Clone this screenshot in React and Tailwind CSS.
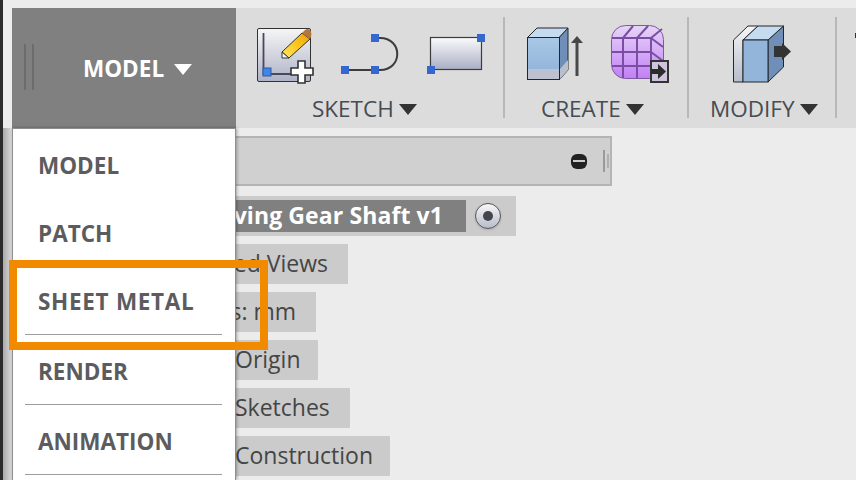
import React from 'react'

const FONT = "font-['Open_Sans','Noto_Sans',sans-serif]"

function SketchIcon() {
  return (
    <svg width="58" height="58" viewBox="0 0 58 58" className="shrink-0 mt-[11px]">
      <defs>
        <linearGradient id="paper" x1="0" y1="0" x2="0" y2="1">
          <stop offset="0" stopColor="#f6f6f7" />
          <stop offset="1" stopColor="#aeb2c6" />
        </linearGradient>
        <linearGradient id="pencil" x1="0" y1="1" x2="1" y2="0">
          <stop offset="0" stopColor="#ffe868" />
          <stop offset="0.5" stopColor="#fbc81e" />
          <stop offset="1" stopColor="#e9a010" />
        </linearGradient>
      </defs>
      <rect x="0.5" y="0.5" width="53" height="53" rx="1.5" fill="url(#paper)" stroke="#333" strokeWidth="1" />
      <path d="M6.5 5V46H36" fill="none" stroke="#45495a" strokeWidth="1.8" />
      <rect x="6" y="40" width="8" height="8" fill="#3f86e6" stroke="#2a5ba8" />
      <path d="M25 24L45 5L53 11L32 30Z" fill="url(#pencil)" stroke="#333" strokeWidth="1" />
      <path d="M25 24L32 30L25 30Z" fill="#f4f4f4" stroke="#333" strokeWidth="1" />
      <path d="M45 5L48 2C50 0 54 1 54 4C55 6 54 9 53 11Z" fill="#b5763c" />
      <path d="M41 33H48V40H56V47H48V55H41V47H34V40H41Z" fill="#fff" stroke="#333" strokeWidth="1.6" />
    </svg>
  )
}

function ArcIcon() {
  return (
    <svg width="60" height="42" viewBox="0 0 60 42" className="shrink-0 mt-[17px] ml-[26px]">
      <path d="M8 36H30M34 36H39C62 36 62 4 39 4H36" fill="none" stroke="#3c3c40" strokeWidth="2" />
      <rect x="0" y="32" width="8" height="8" fill="#3568cf" />
      <rect x="30" y="32" width="8" height="8" fill="#3568cf" />
      <rect x="30" y="0" width="8" height="8" fill="#3568cf" />
    </svg>
  )
}

function RectIcon() {
  return (
    <svg width="60" height="42" viewBox="0 0 60 42" className="shrink-0 mt-[17px] ml-[26px]">
      <defs>
        <linearGradient id="rectFill" x1="0" y1="0" x2="0" y2="1">
          <stop offset="0" stopColor="#fbfbfc" />
          <stop offset="1" stopColor="#a8aec4" />
        </linearGradient>
      </defs>
      <rect x="3.5" y="3.5" width="51" height="32" fill="url(#rectFill)" stroke="#3c3c40" strokeWidth="1.2" />
      <rect x="0" y="32" width="8" height="8" fill="#3568cf" />
      <rect x="50" y="0" width="8" height="8" fill="#3568cf" />
    </svg>
  )
}

function ExtrudeIcon() {
  return (
    <svg width="56" height="54" viewBox="0 0 56 54" className="shrink-0 mt-[10px]">
      <defs>
        <linearGradient id="boxFront" x1="0" y1="0" x2="0" y2="1">
          <stop offset="0" stopColor="#a9c8e6" />
          <stop offset="1" stopColor="#8db0d6" />
        </linearGradient>
      </defs>
      <path d="M32 10.5L41 1V43L32 53Z" fill="#6f8fb8" stroke="#25262a" strokeWidth="1" />
      <path d="M0.5 10.5L10 1H41L32 10.5Z" fill="#c5dcf0" stroke="#25262a" strokeWidth="1" />
      <rect x="0.5" y="10.5" width="32" height="42" fill="url(#boxFront)" stroke="#25262a" strokeWidth="1" />
      <rect x="1" y="42" width="31" height="10" fill="#bcc2cf" />
      <path d="M33 42L41 33V43L33 52Z" fill="#b9bfcc" />
      <path d="M50 49V12" stroke="#48484a" strokeWidth="3" />
      <path d="M44 16L50 9L56 16Z" fill="#48484a" />
    </svg>
  )
}

function PatchIcon() {
  return (
    <svg width="58" height="58" viewBox="0 0 58 58" className="shrink-0 mt-[8px] ml-[28px]">
      <defs>
        <linearGradient id="purple" x1="0" y1="0" x2="0" y2="1">
          <stop offset="0" stopColor="#e6d6f6" />
          <stop offset="1" stopColor="#c37ff6" />
        </linearGradient>
      </defs>
      <rect x="0.5" y="0.5" width="52" height="53" rx="14" fill="url(#purple)" stroke="#7d5a9c" strokeWidth="1" />
      <path d="M1 13H40L51 4M12 13L22 1M26 13L37 1M40 13L52 22M40 27L52 36M1 27H40M1 41H40M12 13V53M26 13V53M40 13V50" fill="none" stroke="#7a4ea3" strokeWidth="2" />
      <rect x="40" y="36" width="17" height="21" fill="#cfc3dc" stroke="#333" strokeWidth="2" />
      <path d="M40 44H47V39L55 46.500L47 54V49H40Z" fill="#2b2b2b" />
    </svg>
  )
}

function PressPullIcon() {
  return (
    <svg width="58" height="58" viewBox="0 0 58 58" className="shrink-0 mt-[8px]">
      <defs>
        <linearGradient id="slab" x1="0" y1="0" x2="0" y2="1">
          <stop offset="0" stopColor="#f4f5f7" />
          <stop offset="1" stopColor="#b7bccb" />
        </linearGradient>
      </defs>
      <path d="M0.500 15L15 1H25L10 15V57H0.500Z" fill="url(#slab)" stroke="#25262a" strokeWidth="1" />
      <path d="M35 15L50.500 1V42L35 57Z" fill="#6f8fb8" stroke="#25262a" strokeWidth="1" />
      <path d="M10 15L25 1H50.500L35 15Z" fill="#c5dcf0" stroke="#25262a" strokeWidth="1" />
      <rect x="10" y="15" width="25" height="42" fill="#93b5da" stroke="#25262a" strokeWidth="1" />
      <path d="M41 21H49V18L58 26.500L49 35V32H41Z" fill="#333" />
    </svg>
  )
}

function Separator() {
  return <div className="w-[2px] h-[101px] bg-[#b8b8b8] shrink-0" />
}

function Caret({ className }) {
  return (
    <svg width="18" height="11" viewBox="0 0 18 11" className={className}>
      <path d="M0 0H18L9 11Z" fill="currentColor" />
    </svg>
  )
}

function GroupLabel({ label }) {
  return (
    <div className="flex items-center gap-[5px] text-[22.500px] leading-7 text-[#474b52] [font-kerning:none]">
      {label}
      <Caret className="text-[#333]" />
    </div>
  )
}

const menuItems = [
  { label: 'MODEL', box: 'h-[68px] pt-[19px]' },
  { label: 'PATCH', box: 'h-[68px] pt-[19px]' },
  { label: 'SHEET METAL', box: 'h-[67px] pt-[19px] border-b border-[#9c9c9c] tracking-[0.7px]' },
  { label: 'RENDER', box: 'h-[70px] pt-[22px] border-b border-[#9c9c9c]' },
  { label: 'ANIMATION', box: 'h-[70px] pt-[22px] border-b border-[#9c9c9c]' },
]

const rows = [
  { label: 'Named Views', box: 'w-[113px] justify-end pr-[20px]' },
  { label: 'Units: mm', box: 'w-[81px] justify-end pr-[20px]' },
  { label: 'Origin', box: 'w-[83px]' },
  { label: 'Sketches', box: 'w-[115px]' },
  { label: 'Construction', box: 'w-[155px]' },
]

export default function App() {
  return (
    <div className={`${FONT} relative w-[856px] h-[480px] overflow-hidden bg-[#ececec] flex`}>
      <div className="w-[3px] h-full bg-[#2c2c2c] shrink-0" />

      <div className="flex-1 min-w-0 pt-[8px] pl-[9px]">
        <div className="h-[120px] bg-[#dcdcdc] flex">
          <div className="w-[224px] shrink-0 bg-[#808080] flex items-center">
            <div className="ml-[12px] flex gap-[6px] h-[46px] mb-[2px]">
              <div className="w-[2px] bg-[#6c6c6c]" />
              <div className="w-[2px] bg-[#6c6c6c]" />
            </div>
            <div className="ml-[49px] mt-[2px] flex items-center gap-[10px] text-[22.500px] leading-7 font-bold text-white">
              MODEL
              <Caret className="text-white" />
            </div>
          </div>

          <div className="flex-1 min-w-0 flex pt-[9px]">
            <div className="w-[267px] shrink-0 flex flex-col">
              <div className="h-[78px] shrink-0 pl-[21px] flex items-start">
                <SketchIcon />
                <ArcIcon />
                <RectIcon />
              </div>
              <div className="pl-[76px]"><GroupLabel label="SKETCH" /></div>
            </div>
            <Separator />
            <div className="w-[182px] shrink-0 flex flex-col">
              <div className="h-[78px] shrink-0 pl-[22px] flex items-start">
                <ExtrudeIcon />
                <PatchIcon />
              </div>
              <div className="pl-[36px]"><GroupLabel label="CREATE" /></div>
            </div>
            <Separator />
            <div className="w-[146px] shrink-0 flex flex-col">
              <div className="h-[78px] shrink-0 pl-[44px] flex items-start"><PressPullIcon /></div>
              <div className="pl-[21px]"><GroupLabel label="MODIFY" /></div>
            </div>
            <Separator />
            <div className="ml-[18px] w-[1px] h-[5px] mt-[16px] bg-[#333]" />
          </div>
        </div>

        <div className="pl-[223px] pt-[8px]">
          <div className="w-[377px] h-[50px] bg-[#d0d0d0] border-y-2 border-r-2 border-[#b4b4b4] flex items-center justify-end">
            <div className="w-[16px] h-[15px] rounded-[6px] bg-[#222] flex items-center justify-center mr-[16px]">
              <div className="w-[12px] h-[2px] bg-[#ccc]" />
            </div>
            <div className="w-[2px] h-[22px] bg-[#9a9a9a] mr-[2px]" />
            <div className="w-[2px] h-[14px] bg-[#b0b0b0] mr-[1px]" />
          </div>

          <div className="mt-[10px] w-[281px] h-[40px] bg-[#cbcbcb] flex items-center">
            <div className="w-[231px] h-[32px] bg-[#808080] text-white text-[23px] leading-[31px] font-bold whitespace-nowrap flex justify-end pr-[23px]">
              <span className="tracking-[0.1px]">Driving Gear Shaft v1</span>
            </div>
            <div className="ml-[9px] w-[26px] h-[26px] rounded-full bg-gradient-to-b from-[#f8f8f8] to-[#b8bccb] border border-[#555] flex items-center justify-center shadow-sm">
              <div className="w-[10px] h-[10px] rounded-full bg-[#44464c]" />
            </div>
          </div>

          <div className="mt-[8px] flex flex-col gap-[8px]">
            {rows.map((row) => (
              <div key={row.label} className={`${row.box} flex h-[40px] bg-[#cbcbcb] text-[23px] leading-[39px] text-[#454545] whitespace-nowrap`}>
                <span>{row.label}</span>
              </div>
            ))}
          </div>
        </div>
      </div>

      <div className="absolute left-[3px] top-[128px] w-[9px] h-[352px] bg-gradient-to-r from-[#aaaaaa] to-[#dcdcdc]" />

      <div className="absolute left-[12px] top-[128px] w-[224px] h-[352px] bg-white border-x border-t border-[#8e8e8e] shadow-[1px_0_3px_rgba(0,0,0,0.3)] pt-[3px]">
        {menuItems.map((item) => (
          <div key={item.label} className={`${item.box} ml-[12px] mr-[13px] pl-[13px] text-[22.500px] leading-[30px] font-bold text-[#5c5c5f] [font-kerning:none]`}>
            {item.label}
          </div>
        ))}
      </div>

      <div className="absolute left-[9px] top-[260px] w-[259px] h-[90px] border-[8px] border-[#f28a00]" />
    </div>
  )
}
